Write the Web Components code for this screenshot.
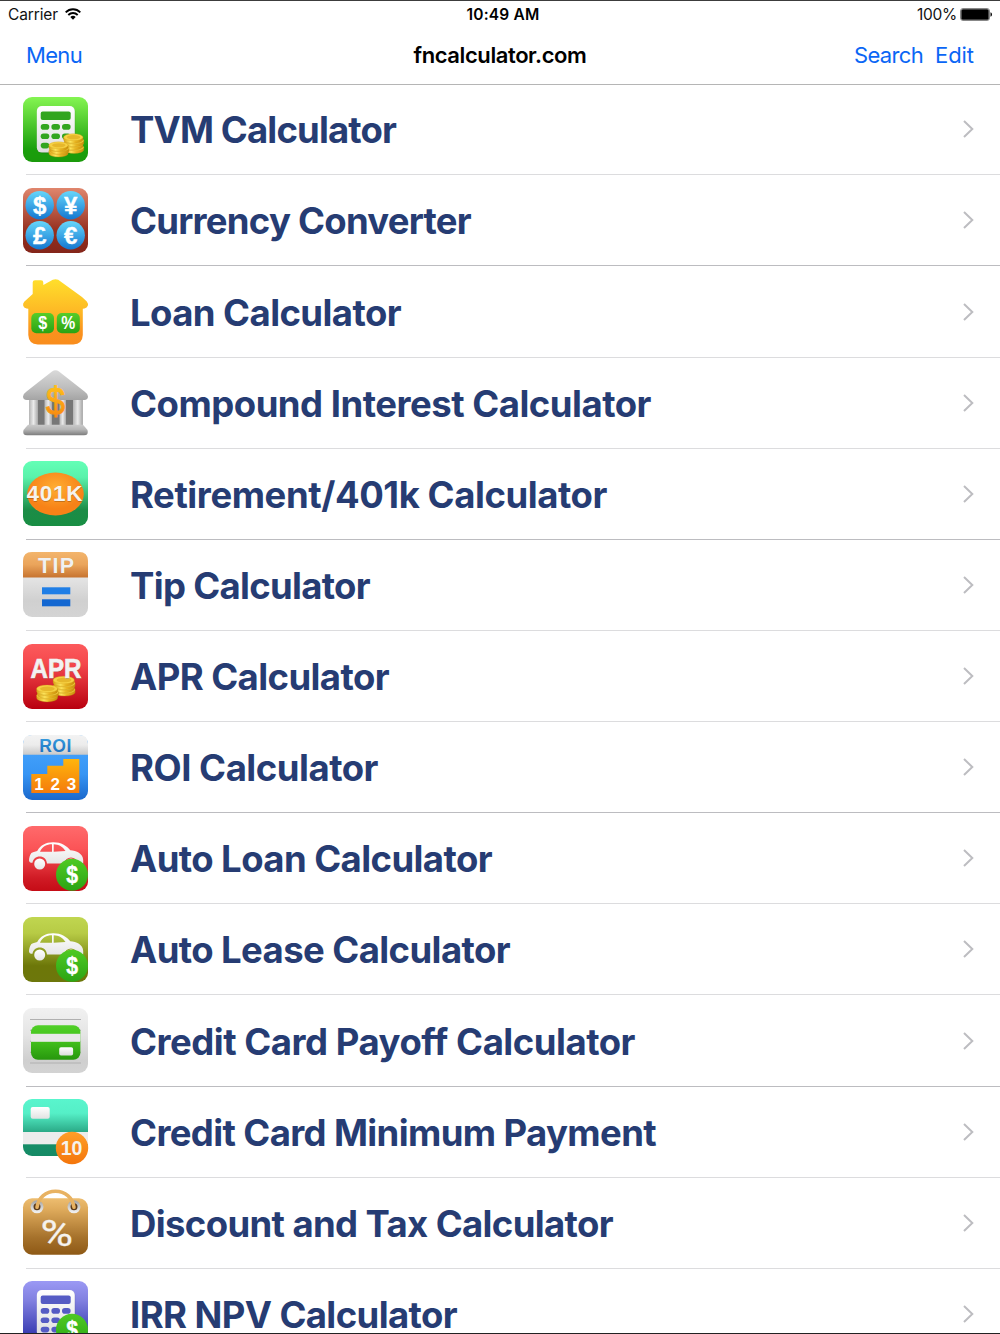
<!DOCTYPE html>
<html lang="en">
<head>
    <meta charset="UTF-8"/>
    <meta name="viewport" content="width=device-width, initial-scale=1">
    <title>fncalculator.com</title>
    <style>
        body {
            margin: 0;
            background: #fff;
            font-family: Inter, "Liberation Sans", sans-serif;
        }
    </style>
</head>
<body>

<calc-app>
    <status-bar slot="top"></status-bar>
    <nav-bar slot="top">
        <fit-text slot="left" width="56">Menu</fit-text>
        <fit-text width="173">fncalculator.com</fit-text>
        <fit-text slot="right" width="69">Search</fit-text>
        <fit-text slot="right" width="39">Edit</fit-text>
    </nav-bar>
    <calc-row icon="tvm" width="266">TVM Calculator</calc-row>
    <calc-row icon="currency" width="341">Currency Converter</calc-row>
    <calc-row icon="loan" width="271">Loan Calculator</calc-row>
    <calc-row icon="bank" width="521">Compound Interest Calculator</calc-row>
    <calc-row icon="retirement" width="477">Retirement/401k Calculator</calc-row>
    <calc-row icon="tip" width="240">Tip Calculator</calc-row>
    <calc-row icon="apr" width="259">APR Calculator</calc-row>
    <calc-row icon="roi" width="248">ROI Calculator</calc-row>
    <calc-row icon="auto" width="362">Auto Loan Calculator</calc-row>
    <calc-row icon="lease" width="380">Auto Lease Calculator</calc-row>
    <calc-row icon="credit" width="505">Credit Card Payoff Calculator</calc-row>
    <calc-row icon="minimum" width="526">Credit Card Minimum Payment</calc-row>
    <calc-row icon="discount" width="483">Discount and Tax Calculator</calc-row>
    <calc-row icon="irr" width="327">IRR NPV Calculator</calc-row>
</calc-app>

<script>
    // Small helpers shared by the icons

    function gradient(id, stops) {
        const list = stops.map(([offset, color]) => `<stop offset="${offset}" stop-color="${color}"/>`).join('');
        return `<linearGradient id="${id}" x1="0" y1="0" x2="0" y2="1">${list}</linearGradient>`;
    }

    function tile(stops) {
        return `<defs>${gradient('bg', stops)}</defs><rect width="65" height="65" rx="9" fill="url(#bg)"/>`;
    }

    function coins(x, y, w, h, count) {
        const rx = w / 2;
        const ry = w * 0.18;
        const step = (h - 2 * ry - 2.5) / (count - 1);
        let out = '';
        for (let i = count - 1; i >= 0; i--) {
            const cx = x + rx + (i % 2 ? 0.5 : -0.3);
            const cy = y + ry + i * step;
            out += `<path d="M${cx - rx} ${cy}v2.6a${rx} ${ry} 0 0 0 ${w} 0v-2.6z" fill="url(#coin)" stroke="#b98a10" stroke-width=".3"/>
                <ellipse cx="${cx}" cy="${cy}" rx="${rx}" ry="${ry}" fill="#f6d143" stroke="#cf9c18" stroke-width=".3"/>`;
        }
        out += `<ellipse cx="${x + rx}" cy="${y + ry}" rx="${rx * 0.7}" ry="${ry * 0.6}" fill="#e6b72b"/>`;
        return `<defs><linearGradient id="coin"><stop offset="0" stop-color="#d9a216"/><stop offset=".35" stop-color="#fde45c"/>
            <stop offset=".6" stop-color="#e9b522"/><stop offset="1" stop-color="#c98f0c"/></linearGradient></defs>${out}`;
    }

    function calculator(key) {
        let keys = '';
        for (const y of [27, 36.4, 45.7]) {
            for (const x of [17.7, 28.4, 39]) {
                keys += `<rect x="${x}" y="${y}" width="8.6" height="5.7" rx="2.8"/>`;
            }
        }
        return `<defs>${gradient('body', [[0, '#fff'], [1, '#dedede']])}</defs>
            <rect x="13.8" y="9.6" width="38.4" height="46.6" rx="5" fill="#000" opacity=".2"/>
            <rect x="13.8" y="9" width="38" height="46.6" rx="5" fill="url(#body)"/>
            <g fill="${key}"><rect x="17.7" y="14.6" width="30" height="8.4" rx="2"/>${keys}</g>`;
    }

    function badge() {
        return `<defs>${gradient('badge', [[0, '#4fca24'], [1, '#2ba413']])}</defs>
            <circle cx="49" cy="48.7" r="16" fill="url(#badge)"/>
            <text x="43.2" y="56.6" font-size="23" fill="#fff" textLength="11.8" lengthAdjust="spacingAndGlyphs" stroke="#fff" stroke-width=".4">$</text>`;
    }

    function car() {
        return `<defs>${gradient('car', [[0, '#fff'], [1, '#e6e6e6']])}</defs>
            <path fill="url(#car)" fill-rule="evenodd" d="M6 34.5c0-2 .7-5.6 2.4-7.4 1-1 3.700-1.300 5.800-2.100C18 19 22.500 16.400 30 16.300c8-.1 13.300 3.200 17.300 8 6 .2 12.700 3.500 12.900 9.700v3.500H55c-1-4-3.500-6-7-6s-6 2-7 6H24c-.5-4.500-3.400-7-7.200-7-4 0-6.800 2.700-7.300 6.300C7.200 36.800 6.200 36 6 34.500zM17 25.700h12v-7.400c-5.600 0-9.500 2-12 7.400zM30.700 25.700l11.800-.6c-3-4.500-6.600-6.700-11.800-6.800z"/>
            <circle cx="16.700" cy="38" r="5.500" fill="url(#car)"/>
            <circle cx="48" cy="38" r="5.500" fill="url(#car)"/>${badge()}`;
    }

    function currencySign(x, y, sign) {
        return `<circle cx="${x}" cy="${y}" r="14.200" fill="url(#ball)"/>
            <text x="${x}" y="${y + 8.300}" font-size="24" text-anchor="middle" fill="#fff" stroke="#fff" stroke-width=".4">${sign}</text>`;
    }

    const icons = {
        tvm: () => tile([[0, '#84f552'], [0.15, '#72e545'], [0.8, '#1a9f0b'], [1, '#1a9a0b']]) + calculator('#32a51f')
            + coins(40.9, 36.7, 19.4, 19.6, 4) + coins(26.2, 44.8, 19.2, 15.2, 3),

        currency: () => tile([[0, '#e0866d'], [0.65, '#96301f'], [1, '#84251a']])
            + `<defs>${gradient('ball', [[0, '#66d6fb'], [1, '#1477d0']])}</defs>`
            + currencySign(16.7, 17.2, '$') + currencySign(47.7, 17.2, '¥')
            + currencySign(16.7, 47.3, '£') + currencySign(47.7, 47.3, '€'),

        loan: () => `<defs>${gradient('house', [[0, '#ffdf2b'], [0.5, '#fdb825'], [0.8, '#fa921e'], [1, '#f98d1d']])}
            ${gradient('sign', [[0, '#57cc29'], [1, '#29a313']])}</defs>
            <path fill="url(#house)" d="M9.700 15V3.600Q9.700 1.300 12 1.300h6q2.300 0 2.300 2.300V6l9.500-5.200q2.700-1.200 5.400 0L59 18l4.800 4.600q1.700 2.200 1 4.200-.8 2.200-3.300 2.700l-1.700.2V56q-.3 9-9.500 9.600H14.800Q5.600 65 5.300 56V29.700l-1.800-.2Q.800 29 .2 26.800q-.6-2.100 1-4z"/>
            <rect x="8.300" y="34" width="22.700" height="20.300" rx="5" fill="url(#sign)"/>
            <rect x="33.800" y="34" width="23" height="20.300" rx="5" fill="url(#sign)"/>
            <g fill="#fff" font-size="17.5"><text x="15.200" y="50.400" textLength="9" lengthAdjust="spacingAndGlyphs">$</text>
            <text x="38.300" y="50.400" textLength="14" lengthAdjust="spacingAndGlyphs">%</text></g>`,

        bank: () => `<defs>${gradient('roof', [[0, '#d9d9d9'], [0.7, '#b8b8b8'], [1, '#a4a4a4']])}
            ${gradient('base', [[0, '#cacaca'], [0.45, '#b6b6b6'], [1, '#7c7c7c']])}
            ${gradient('gold', [[0, '#ffc91c'], [1, '#f77e0d']])}
            <linearGradient id="column"><stop offset="0" stop-color="#b4b4b4"/><stop offset=".5" stop-color="#ebebeb"/>
            <stop offset="1" stop-color="#a8a8a8"/></linearGradient></defs>
            <rect x="6" y="29" width="53.500" height="27" fill="#777"/>
            <g fill="url(#column)"><rect x="6" y="29" width="9" height="27"/><rect x="21.500" y="29" width="7.500" height="27"/>
            <rect x="36.500" y="29" width="6.500" height="27"/><rect x="50" y="29" width="9.500" height="27"/></g>
            <path fill="url(#roof)" d="M0 26.500Q0 24 3.500 21.500L29 1.500q3.500-2.500 7 0l25.500 20Q65 24 65 26.500q0 3.200-3.800 3.500H3.800Q0 29.700 0 26.500z"/>
            <path fill="url(#base)" d="M5 54.700h55L64.500 60q1.500 5.300-3.500 5.300H4Q-1 65.300.5 60z"/>
            <text x="23" y="45.400" font-size="39" font-weight="400" textLength="19" lengthAdjust="spacingAndGlyphs" fill="url(#gold)" stroke="url(#gold)" stroke-width="1">$</text>`,

        retirement: () => tile([[0, '#63ffb6'], [0.25, '#5af2ab'], [0.75, '#1c8c47'], [1, '#188e43']])
            + `<defs><radialGradient id="oval" cy=".35"><stop offset="0" stop-color="#ffad33"/><stop offset="1" stop-color="#f78217"/></radialGradient></defs>
            <ellipse cx="32.500" cy="33" rx="28.300" ry="21.400" fill="url(#oval)"/>
            <text x="3.600" y="40.600" font-size="22.5" textLength="56" fill="#000" opacity=".2">401K</text>
            <text x="3.600" y="39.700" font-size="22.5" textLength="56" fill="#f5f3ef">401K</text>`,

        tip: () => tile([[0, '#e6e6e6'], [0.4, '#e4e4e4'], [0.75, '#d0d0d0'], [1, '#d4d4d4']])
            + `<defs>${gradient('band', [[0, '#f3b56c'], [0.5, '#eaa45b'], [1, '#c77430']])}</defs>
            <path fill="url(#band)" d="M0 25.400V9q0-9 9-9h47q9 0 9 9v16.400z"/>
            <text x="15" y="21.300" font-size="21.500" textLength="36" fill="#000" opacity=".2">TIP</text>
            <text x="15" y="20.500" font-size="21.500" textLength="36" fill="#f1f1f1">TIP</text>
            <rect x="19" y="35.300" width="28.300" height="7" fill="#1f7ee6"/><rect x="19" y="47.300" width="28.300" height="7" fill="#1367d1"/>`,

        apr: () => tile([[0, '#fc5a5c'], [0.3, '#f5494d'], [1, '#b8000f']])
            + coins(30.4, 32.2, 21.2, 19.8, 4) + `<text x="7.500" y="34.600" font-size="27.5" textLength="51" fill="#000" opacity=".25" lengthAdjust="spacingAndGlyphs">APR</text>
            <text x="7.500" y="33.900" font-size="27.5" textLength="51" lengthAdjust="spacingAndGlyphs" fill="#f2f2f2" stroke="#f2f2f2" stroke-width=".7">APR</text>`
            + coins(13.9, 41, 21, 16.8, 3),

        roi: () => tile([[0, '#4aa8ff'], [0.6, '#3795f4'], [1, '#1a68cc']])
            + `<defs>${gradient('band', [[0, '#f3f3f3'], [0.5, '#ececec'], [1, '#c8c8c8']])}
            ${gradient('steps', [[0, '#ffb50c'], [1, '#f47b0c']])}${gradient('word', [[0, '#3ba2e2'], [1, '#1768ba']])}</defs>
            <path fill="url(#band)" d="M0 19.800V9q0-9 9-9h47q9 0 9 9v10.800z"/>
            <text x="16.300" y="16.800" font-size="17.500" textLength="32" fill="url(#word)">ROI</text>
            <path fill="url(#steps)" d="M8.300 58V39h16v-8.300h16V24h16v34z"/>
            <g fill="#fff" font-size="17" text-anchor="middle"><text x="16" y="55.300">1</text><text x="32.300" y="55.300">2</text><text x="48.500" y="55.300">3</text></g>`,

        auto: () => tile([[0, '#ff6a6b'], [0.35, '#fb5457'], [0.8, '#d01b25'], [1, '#c50c16']]) + car(),

        lease: () => tile([[0, '#c0d650'], [0.25, '#b7cb45'], [0.75, '#6d7709'], [1, '#6d770b']]) + car(),

        credit: () => tile([[0, '#f1f1f1'], [0.4, '#e5e5e5'], [0.8, '#cfcfcf'], [1, '#d3d3d3']])
            + `<defs>${gradient('card', [[0, '#50cf27'], [0.45, '#43c11c'], [1, '#27970d']])}${gradient('chip', [[0, '#fff'], [1, '#dcdcdc']])}</defs>
            <path d="M7 11.500h51M7 22.300h51M7 33.300h51M7 44.300h51M7 55h51" stroke="#b0b0b0" fill="none"/>
            <rect x="8" y="17.300" width="49.400" height="34.500" rx="7" fill="url(#card)"/>
            <rect x="8" y="25.800" width="49.400" height="8" fill="#e9e9e9"/>
            <rect x="36.200" y="39.300" width="13.900" height="8.200" rx="1.800" fill="url(#chip)"/>`,

        minimum: () => `<defs>${gradient('card', [[0, '#59f5cd'], [0.25, '#55efc7'], [0.58, '#2aa986'], [0.78, '#178e68'], [1, '#158a65']])}
            ${gradient('chip', [[0, '#fff'], [1, '#e2e2e2']])}${gradient('ten', [[0, '#ff9f29'], [1, '#f4750b']])}</defs>
            <rect width="65" height="57" rx="9" fill="url(#card)"/>
            <rect y="33" width="65" height="12.300" fill="#ececec"/>
            <rect x="7.700" y="8" width="19" height="11.800" rx="2" fill="url(#chip)"/>
            <circle cx="49" cy="49" r="16.200" fill="url(#ten)"/>
            <text x="48.500" y="56" font-size="19.500" text-anchor="middle" fill="#f5f2ed">10</text>`,

        discount: () => `<defs>${gradient('bag', [[0, '#edbd70'], [0.2, '#deaa5b'], [0.7, '#a5712b'], [1, '#8e5915']])}
            ${gradient('ring', [[0, '#aaa'], [1, '#eee']])}</defs>
            <rect y="8.300" width="65" height="56.400" rx="9" fill="url(#bag)"/>
            <g fill="#5a3919" stroke="url(#ring)" stroke-width="3"><circle cx="14" cy="16.800" r="5"/><circle cx="51" cy="16.800" r="5"/></g>
            <path d="M14 17.300C15.500 7.500 22.800 1.300 32.500 1.300S49.500 7.500 51 17.300" stroke="#e8b262" stroke-width="3.600" stroke-linecap="round" fill="none"/>
            <text x="17.500" y="56" style="font-family: Roboto, sans-serif; font-weight: 400" font-size="37" textLength="32.500" lengthAdjust="spacingAndGlyphs" fill="#f5f2ee" stroke="#f5f2ee" stroke-width=".3">%</text>`,

        irr: () => tile([[0, '#9b99f4'], [0.3, '#8180e0'], [0.8, '#3c3fb4'], [1, '#373baf']]) + calculator('#555bc4') + badge()
    };

    // Text set to a given width by even tracking
    class FitText extends HTMLElement {
        constructor() {
            super();
            this._shadowRoot = this.attachShadow({ mode: 'open' });
            this._shadowRoot.innerHTML = `
                <style>
                    :host { display: block; white-space: nowrap; }
                    span { display: inline-block; }
                </style>
                <span><slot></slot></span>
            `;
        }

        connectedCallback() {
            requestAnimationFrame(() => this.fit());
            this.fit();
        }

        fit() {
            const span = this._shadowRoot.querySelector('span');
            const width = Number(this.getAttribute('width'));
            const length = this.textContent.trim().length;
            span.style.letterSpacing = '0';
            const natural = span.getBoundingClientRect().width;
            if (width && length) {
                span.style.letterSpacing = `${(width - natural) / length}px`;
            }
        }
    }

    class StatusBar extends HTMLElement {
        constructor() {
            super();
            this.attachShadow({ mode: 'open' }).innerHTML = `
                <style>
                    :host {
                        display: grid;
                        grid-template-columns: 1fr auto 1fr;
                        align-items: center;
                        height: 26px;
                        padding: 0 8px;
                        font-size: 15.5px;
                        color: #111;
                    }
                    div { display: flex; align-items: center; }
                    .left { gap: 7px; }
                    .time { font-weight: 600; color: #000; padding-left: 6px; }
                    .right { justify-content: flex-end; gap: 3px; }
                    svg { display: block; }
                </style>
                <div class="left">
                    <fit-text width="50">Carrier</fit-text>
                    <svg width="16" height="12" viewBox="0 0 16 12" fill="none" stroke="#000" stroke-width="1.900">
                        <path d="M.7 4.300C4.800.2 11.200.2 15.300 4.300M3.300 7C6 4.400 10 4.400 12.700 7"/>
                        <path d="M8 11.700L5.300 9q2.700-2.300 5.400 0z" fill="#000" stroke="none"/>
                    </svg>
                </div>
                <div class="time"><fit-text width="73">10:49 AM</fit-text></div>
                <div class="right">
                    <fit-text width="40">100%</fit-text>
                    <svg width="32" height="13" viewBox="0 0 32 13">
                        <rect x=".5" y=".5" width="29" height="12" rx="2.500" fill="#fff" stroke="#888"/>
                        <rect x="1.300" y="1.300" width="27.400" height="10.400" rx="1.500"/>
                        <path d="M30.500 4.300q1.500.5 1.500 2.200t-1.500 2.200z"/>
                    </svg>
                </div>
            `;
        }
    }

    class NavBar extends HTMLElement {
        constructor() {
            super();
            this.attachShadow({ mode: 'open' }).innerHTML = `
                <style>
                    :host {
                        display: grid;
                        grid-template-columns: 1fr auto 1fr;
                        align-items: center;
                        box-sizing: border-box;
                        height: 58px;
                        padding: 0 26px 2px;
                        border-bottom: 1px solid #b5b5b5;
                        font-size: 22px;
                        color: #0a66f5;
                    }
                    div { display: flex; }
                    .title { font-weight: 600; color: #000; }
                    .right { justify-content: flex-end; gap: 12px; }
                </style>
                <div><slot name="left"></slot></div>
                <div class="title"><slot></slot></div>
                <div class="right"><slot name="right"></slot></div>
            `;
        }
    }

    class CalcIcon extends HTMLElement {
        constructor() {
            super();
            this._shadowRoot = this.attachShadow({ mode: 'open' });
        }

        connectedCallback() {
            const draw = icons[this.getAttribute('name')];
            this._shadowRoot.innerHTML = `
                <style>
                    :host { display: block; width: 65px; height: 65px; }
                    svg { display: block; overflow: visible; font-family: "Liberation Sans", sans-serif; font-weight: 700; }
                </style>
                <svg width="65" height="65" viewBox="0 0 65 65">${draw ? draw() : ''}</svg>
            `;
        }
    }

    class CalcRow extends HTMLElement {
        constructor() {
            super();
            this._shadowRoot = this.attachShadow({ mode: 'open' });
        }

        connectedCallback() {
            this._shadowRoot.innerHTML = `
                <style>
                    :host { display: block; height: 91.140px; }
                    .row {
                        display: flex;
                        align-items: center;
                        box-sizing: border-box;
                        height: 100%;
                        margin-left: 26px;
                        padding-right: 26px;
                        border-bottom: 1px solid var(--line, #dcdcde);
                    }
                    calc-icon { margin-left: -3px; }
                    .name {
                        flex: 1;
                        margin-left: 42px;
                        padding-top: 2px;
                        font-size: 36.500px;
                        font-weight: 650;
                        line-height: 36px;
                        color: #263c73;
                    }
                </style>
                <div class="row">
                    <calc-icon name="${this.getAttribute('icon')}"></calc-icon>
                    <div class="name"></div>
                    <svg width="11" height="18" viewBox="0 0 11 18" fill="none" stroke="#bdbdc1" stroke-width="2"><path d="M1 1l8.300 8L1 17"/></svg>
                </div>
            `;
            const label = document.createElement('fit-text');
            label.setAttribute('width', this.getAttribute('width'));
            label.textContent = this.textContent;
            this._shadowRoot.querySelector('.name').appendChild(label);
        }
    }

    class CalcApp extends HTMLElement {
        constructor() {
            super();
            this.attachShadow({ mode: 'open' }).innerHTML = `
                <style>
                    :host {
                        display: flex;
                        flex-direction: column;
                        box-sizing: border-box;
                        height: 1334px;
                        overflow: hidden;
                        border-top: 1px solid #3c3c3c;
                        border-bottom: 1px solid #222;
                        background: #fff;
                    }
                    main { flex: 1; min-height: 0; margin-top: -.8px; overflow: hidden; }
                    ::slotted(calc-row:nth-of-type(3n+2)) { --line: #bcbcc0; }
                </style>
                <slot name="top"></slot>
                <main><slot></slot></main>
            `;
        }
    }

    window.customElements.define('fit-text', FitText);
    window.customElements.define('status-bar', StatusBar);
    window.customElements.define('nav-bar', NavBar);
    window.customElements.define('calc-icon', CalcIcon);
    window.customElements.define('calc-row', CalcRow);
    window.customElements.define('calc-app', CalcApp);
</script>
</body>
</html>
